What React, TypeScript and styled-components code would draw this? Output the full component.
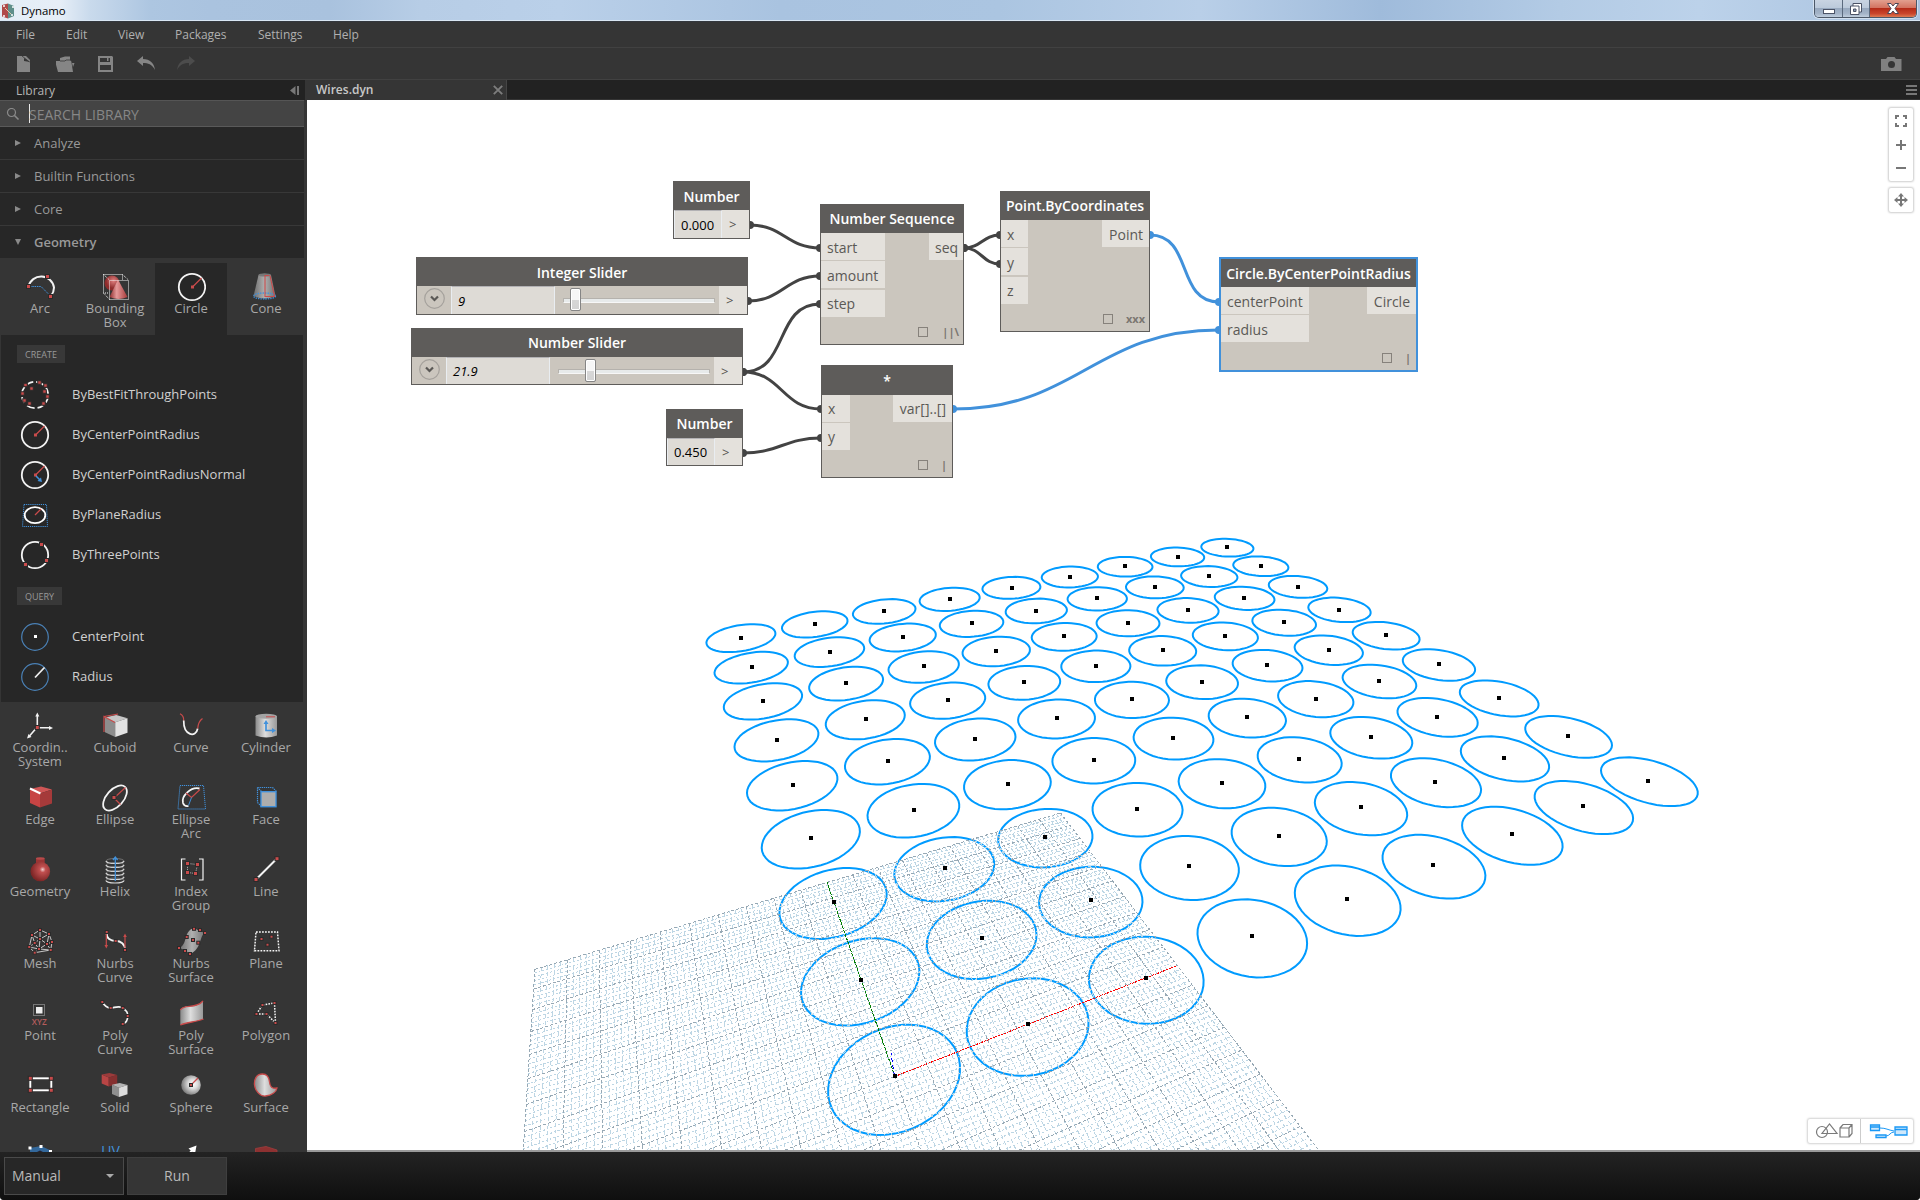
import React from "react";
import styled, { createGlobalStyle, css } from "styled-components";

const GlobalStyle = createGlobalStyle`
  * { box-sizing: border-box; }
  html, body { margin: 0; padding: 0; }
  body {
    width: 1920px; height: 1200px; overflow: hidden; background: #fff;
    font-family: "Open Sans", "Noto Sans", sans-serif;
  }
  svg { display: block; }
`;

const RED = "#c94b4b";
const BLUE = "#4191db";
const INK = "#2a2a2a";

/* ------------------------------------------------------------------ */
/* Window frame                                                        */
/* ------------------------------------------------------------------ */

const Window = styled.div`
  width: 1920px; height: 1200px;
  display: flex; flex-direction: column;
  background: #353535; overflow: hidden;
  border-radius: 0 0 4px 4px;
`;

const TitleBar = styled.header`
  height: 22px; flex: none;
  display: flex; align-items: flex-start; justify-content: space-between;
  background: linear-gradient(90deg, #e4edf6 0, #e6eef7 60px, #c9daec 90px, #adc6e1 150px, #aac3df 210px,
    #a9c2de 330px, #b7cde6 420px, #bad0e9 560px, #a9c3e0 780px, #abc5e1 1000px, #b9cfe8 1200px,
    #9fbbdb 1380px, #b3cbe5 1560px, #bcd2ea 1700px, #a9c2df 1920px);
  border-bottom: 1px solid #33373d;
  box-shadow: inset 0 -1px 0 #d9e6f3;
`;
const TitleLeft = styled.div`
  display: flex; align-items: center; gap: 6px; height: 21px; padding-left: 2px;
  font-size: 11.4px; color: #000;
`;
const WinButtons = styled.div`
  display: flex; width: 103px; height: 18px; margin-right: 3px;
  border: 1px solid #4c5868; border-top: 0; border-radius: 0 0 5px 5px; overflow: hidden;
  box-shadow: 0 0 0 1px rgba(255,255,255,.45);
`;
const WinButton = styled.div<{ $w: number; $close?: boolean }>`
  width: ${p => p.$w}px; height: 17px; display: flex; align-items: center; justify-content: center;
  border-right: 1px solid #5b6a7e;
  background: ${p => p.$close
    ? "linear-gradient(#e2a08f 0, #d37461 45%, #b52c18 50%, #c9452c 80%, #dd7a52)"
    : "linear-gradient(#c9d4e2 0, #bccadb 45%, #98a9bf 50%, #a4b4c8 80%, #c0cede)"};
  &:last-child { border-right: 0; }
`;

const MenuBar = styled.nav`
  height: 26px; flex: none; display: flex; padding-left: 16px; align-items: center;
  background: #353535; border-bottom: 1px solid #414141;
  font-size: 12px; color: #b0b0b0;
`;
const MenuItem = styled.span<{ $w: number }>`
  width: ${p => p.$w}px; line-height: 16px;
`;
const ToolBar = styled.div`
  height: 32px; flex: none; display: flex; align-items: center; justify-content: space-between;
  padding: 0 18px 0 16px; background: #353535; border-bottom: 1px solid #414141;
`;
const ToolGroup = styled.div`display: flex; gap: 20px;`;

const Main = styled.div`
  flex: 1; min-height: 0; display: flex;
`;

/* ------------------------------------------------------------------ */
/* Library sidebar                                                     */
/* ------------------------------------------------------------------ */

const Sidebar = styled.aside`
  width: 307px; height: 1072px; flex: none; display: flex; flex-direction: column;
  background: #353535; overflow: hidden;
`;
const LibraryHead = styled.div`
  width: 305px; height: 20px; flex: none; display: flex; align-items: center; justify-content: space-between;
  background: #222; color: #b5b5b5; font-size: 12px; padding: 1px 5px 0 16px;
`;
const SearchBox = styled.div`
  width: 304px; height: 27px; flex: none; display: flex; align-items: center;
  background: #444; border-top: 1px solid #555; border-bottom: 1px solid #5a5a5a;
  color: #878787; font-size: 14px; padding: 2px 0 0 6px;
`;
const Caret = styled.span`
  width: 1px; height: 19px; background: #e8e8e8; margin: -3px -1px 0 9px;
`;
const Category = styled.div<{ $open?: boolean }>`
  width: 304px; height: ${p => (p.$open ? 32 : 33)}px; flex: none; display: flex; align-items: center;
  background: #272727; border-bottom: ${p => (p.$open ? "0" : "1px solid #383838")};
  padding-left: 15px; gap: 13px; font-size: 13px; color: #999;
  font-weight: ${p => (p.$open ? 600 : 400)};
`;
const TileGrid = styled.div<{ $top?: number }>`
  display: grid; grid-template-columns: 75px 76px 75px 72px; grid-auto-rows: 72px;
  justify-items: start; padding: ${p => p.$top ?? 0}px 0 0 4px; flex: none;
`;
const TileBox = styled.div<{ $active?: boolean }>`
  width: 72px; height: 72px; padding-top: 9px; display: flex; flex-direction: column; align-items: center;
  ${p => p.$active && css`background: #272727;`}
`;
const TileLabel = styled.div`
  margin-top: -1px; color: #a8a8a8; font-size: 13px; line-height: 14px; text-align: center; white-space: pre;
`;
const Panel = styled.section`
  width: 302px; height: 367px; margin-left: 1px; flex: none; background: #272727; padding: 10px 0 0 16px;
`;
const Tag = styled.div<{ $w: number }>`
  width: ${p => p.$w}px; height: 18px; background: #383838; color: #999;
  font-size: 9px; line-height: 19px; text-align: center;
`;
const MethodList = styled.div<{ $pt: number; $pb: number }>`
  padding: ${p => p.$pt}px 0 ${p => p.$pb}px 3px;
`;
const Method = styled.div`
  height: 40px; display: flex; align-items: center; gap: 22px;
  color: #d0d0d0; font-size: 13px; line-height: 18px;
`;
const MethodName = styled.span`padding-bottom: 2px;`;

/* ------------------------------------------------------------------ */
/* Workspace                                                           */
/* ------------------------------------------------------------------ */

const Workspace = styled.main`
  flex: 1; min-width: 0; display: flex; flex-direction: column;
`;
const TabStrip = styled.div`
  height: 20px; flex: none; display: flex; justify-content: space-between; background: #222;
  border-bottom: 1px solid #353535;
`;
const Tab = styled.div`
  width: 200px; height: 20px; display: flex; align-items: center; justify-content: space-between;
  background: #353535; border-right: 1px solid #454545; padding: 0 3px 0 9px;
  color: #c8c8c8; font-size: 12px; font-weight: 600; line-height: 18px;
`;
const StripMenu = styled.div`
  width: 11px; margin: 5px 3px 0 0; display: flex; flex-direction: column; gap: 2px;
`;
const StripLine = styled.i`height: 2px; background: #777;`;

const Canvas = styled.div`
  position: relative; width: 1613px; height: 1052px; background: #fff; overflow: hidden;
  border-bottom: 2px solid #9a9a9a;
`;
const Layer = styled.svg`position: absolute; left: 0; top: 0;`;

const NodeBox = styled.div<{ $x: number; $y: number; $w: number; $h: number; $sel?: boolean }>`
  position: absolute; left: ${p => p.$x - 307}px; top: ${p => p.$y - 100}px;
  width: ${p => p.$w}px; height: ${p => p.$h}px;
  display: flex; flex-direction: column; background: #cbc6be;
  border: ${p => (p.$sel ? "2px solid #4191db" : "1px solid #5e5c5a")};
`;
const NodeHead = styled.div<{ $h: number; $line?: number }>`
  height: ${p => p.$h}px; flex: none; background: #5e5c5a; color: #fff;
  font-size: 14px; font-weight: 600; line-height: ${p => p.$line ?? 30}px; text-align: center; white-space: nowrap;
`;
const NodeBody = styled.div`
  flex: 1; min-height: 0; display: flex; justify-content: space-between; align-items: flex-start;
`;
const PortColumn = styled.div<{ $w: number }>`
  width: ${p => p.$w}px; display: flex; flex-direction: column;
`;
const Port = styled.div<{ $gap?: number; $right?: boolean; $low?: boolean }>`
  height: 27px; margin-bottom: ${p => p.$gap ?? 1}px; background: #e4e1dc; color: #5b5956;
  font-size: 14px; line-height: ${p => (p.$low ? 29 : 27)}px; padding: 0 6px;
  text-align: ${p => (p.$right ? "right" : "left")}; white-space: nowrap;
`;
const NodeFoot = styled.div<{ $pr: number; $gap: number }>`
  height: 25px; flex: none; display: flex; align-items: center; justify-content: flex-end;
  gap: ${p => p.$gap}px; padding-right: ${p => p.$pr}px; color: #7b7671; font-size: 11px; line-height: 14px;
  font-weight: 700;
`;
const PreviewBox = styled.i`width: 10px; height: 10px; border: 1px solid #86817b;`;

const ValueRow = styled.div`flex: 1; min-height: 0; display: flex; align-items: stretch;`;
const ValueField = styled.div<{ $w: number; $italic?: boolean; $line: number }>`
  width: ${p => p.$w}px; background: #dedbd6; color: #000; font-size: 13px; line-height: ${p => p.$line}px;
  border-top: 1px solid #b2b1b4; border-left: 1px solid #e9edf1; border-right: 1px solid #e9edf1;
  padding-left: 6px; font-style: ${p => (p.$italic ? "italic" : "normal")};
`;
const OutPort = styled.div<{ $w: number }>`
  width: ${p => p.$w}px; background: #e4e1dc; color: #55534f; font-size: 13px; line-height: 29px; padding-left: 7px;
`;
const SliderToggle = styled.div<{ $w: number }>`
  width: ${p => p.$w}px; padding: 2px 0 0 7px;
`;
const SliderTrack = styled.div<{ $lead: number }>`
  width: 164px; padding: 2px 0 0 ${p => p.$lead}px; display: flex;
`;
const TrackLine = styled.div`
  width: 152px; height: 5px; margin-top: 10px; border: 1px solid #b5b2ad; border-bottom-color: #f7f7f7;
  background: #e7eaea; border-radius: 1px;
`;
const Thumb = styled.div<{ $at: number }>`
  width: 11px; height: 23px; margin: -11px 0 0 ${p => p.$at}px;
  border: 1px solid #858585; border-radius: 2px; background: linear-gradient(#f6f6f6 0 50%, #d7d7d7 52%, #d3d3d3);
  box-shadow: inset 0 0 0 1px #fff;
`;

const ZoomTools = styled.div`
  position: absolute; right: 7px; top: 8px; display: flex; flex-direction: column; gap: 7px;
`;
const ToolCard = styled.div`
  width: 24px; background: #fff; border-radius: 2px; box-shadow: 0 0 2px 1px rgba(0,0,0,.2);
`;
const ViewSwitch = styled.div`
  position: absolute; right: 7px; bottom: 7px; width: 105px; height: 24px; display: flex;
  background: #fff; border-radius: 2px; box-shadow: 0 0 2px 1px rgba(0,0,0,.18);
`;
const ViewOption = styled.div<{ $w: number; $line?: boolean }>`
  width: ${p => p.$w}px; height: 24px; border-right: ${p => (p.$line ? "1px solid #ccc" : "0")};
`;

/* ------------------------------------------------------------------ */
/* Run bar                                                             */
/* ------------------------------------------------------------------ */

const RunBar = styled.footer`
  height: 48px; flex: none; display: flex; gap: 3px; padding: 5px 0 0 4px;
  background: linear-gradient(#232323, #0f0f0f); font-size: 14px; line-height: 18px; color: #b9b9b9;
`;
const RunMode = styled.div`
  width: 120px; height: 38px; border: 1px solid #4a4a4a; background: #272727;
  display: flex; align-items: center; justify-content: space-between; padding: 0 9px 0 7px;
`;
const RunButton = styled.div`
  width: 100px; height: 38px; border: 1px solid #3f3f3f; background: #353535;
  display: flex; align-items: center; justify-content: center;
`;

/* ------------------------------------------------------------------ */
/* Icons                                                               */
/* ------------------------------------------------------------------ */

const Dots = ({ at, s = 3 }: { at: number[][]; s?: number }) => (
  <>
    {at.map(([x, y], i) => (
      <rect key={i} x={x - s / 2} y={y - s / 2} width={s} height={s} fill={RED} stroke={INK} strokeWidth={1} />
    ))}
  </>
);

const Cube = ({ x, y, w, h, c }: { x: number; y: number; w: number; h: number; c: string[] }) => (
  <g transform={`translate(${x} ${y}) scale(${w / 22} ${h / 21})`}>
    <path d="M0 2.5L10 7v14L0 16.5z" fill={c[0]} />
    <path d="M0 2.5L11 0l11 3L10 7z" fill={c[1]} />
    <path d="M10 7l12-4v14L10 21z" fill={c[2]} />
  </g>
);

const CircleRadius = () => (
  <>
    <circle cx="15" cy="15" r="13.2" fill="none" stroke="#f4f4f4" strokeWidth="1.8" />
    <path d="M15.5 15l9-9" stroke={RED} strokeWidth="1.3" />
    <rect x="14" y="13.5" width="3" height="3" fill={RED} />
  </>
);

const icons: Record<string, React.ReactNode> = {
  Arc: (
    <>
      <path d="M3.5 14.5A13 13 0 0 1 29 15.500Q29 20 26 24" fill="none" stroke="#f2f2f2" strokeWidth="2" />
      <path d="M5 14.5h11l9 9" fill="none" stroke={BLUE} strokeDasharray="1.5 .8" />
      <Dots at={[[3.5, 14.5], [22.5, 4.5], [25.5, 24.5]]} s={4} />
    </>
  ),
  Box: (
    <>
      <circle cx="12" cy="11" r="7.5" fill="url(#redBall)" />
      <path d="M18 7.500L9.500 25q9 4 18 0z" fill="url(#redCone)" />
      <path d="M3.500 2.500h19v5.500M3.500 2.500v18.500h5M3.500 2.500l6 5.500M22.500 2.500l6 5.500M3.500 21l6 6.500M9.500 8.500h19v19h-19z"
        fill="none" stroke="#f4f4f4" strokeDasharray="1 1" />
    </>
  ),
  Circle: <g transform="translate(1 0)"><CircleRadius /></g>,
  Cone: (
    <>
      <path d="M7.500 3q6-2.500 12.500 0l4.500 21q-11 5-22 0z" fill="url(#steel)" />
      <ellipse cx="13.700" cy="3" rx="6.200" ry="1.600" fill="#777" />
      <ellipse cx="13.500" cy="24" rx="11" ry="3" fill="none" stroke={BLUE} strokeWidth="1.300" strokeDasharray="1.400 1" />
      <path d="M18 3.500h-4v21h9.500L19 3.500" fill="none" stroke={RED} strokeWidth="1.100" />
    </>
  ),
  Coord: (
    <>
      <path d="M12.300 15V4M14 16.800h11M11 17.500l-7 8" stroke="#f2f2f2" strokeWidth="1.600" />
      <path d="M12.300 1.500l2 4h-4zM28 17l-4 2v-4zM2 27.500l1.500-4.500 3 3z" fill="#f2f2f2" />
      <Dots at={[[12.300, 16.500]]} s={4} />
    </>
  ),
  Cuboid: (
    <>
      <Cube x={5} y={4} w={22.500} h={22} c={["#8d8d8d", "#c6c6c6", "#e2e2e2"]} />
      <path d="M4 21V5.500l11 6M4 5.500l14-2.500" fill="none" stroke={RED} strokeWidth="1.200" />
    </>
  ),
  Curve: (
    <>
      <path d="M4 2.700q4 2 3.700 7" fill="none" stroke={RED} strokeWidth="1.200" />
      <path d="M7.700 9.500C7.500 25 20 27 21.700 17.500" fill="none" stroke="#f4f4f4" strokeWidth="1.700" />
      <path d="M21.700 17.500q.5-7 4.800-10" fill="none" stroke={RED} strokeWidth="1.200" />
    </>
  ),
  Cylinder: (
    <>
      <path d="M4.500 5v19.500q11 4 21.500 0V5z" fill="url(#steelLight)" />
      <ellipse cx="15.200" cy="5.200" rx="10.700" ry="2.500" fill="#a3a3a3" />
      <path d="M15 5.800h9" stroke={RED} />
      <path d="M15 12v7.500h7" fill="none" stroke={BLUE} strokeWidth="1.700" />
      <path d="M15 9l2.500 4h-5zM25 19.500l-4 2.500v-5z" fill={BLUE} />
    </>
  ),
  Edge: (
    <>
      <Cube x={5} y={3.500} w={22} h={21} c={["#c74444", "#cf5656", "#a53a3a"]} />
      <path d="M5 5.500l10.500 5" stroke="#fff" strokeWidth="2" />
    </>
  ),
  Ellipse: (
    <>
      <ellipse cx="15" cy="15" rx="15" ry="8.500" transform="rotate(-48 15 15)" fill="none" stroke="#f4f4f4" strokeWidth="1.800" />
      <path d="M25.500 4.500L14 15l6.500 6.500" fill="none" stroke={RED} strokeWidth="1.200" />
      <Dots at={[[14, 14.500]]} s={4} />
    </>
  ),
  EllipseArc: (
    <>
      <path d="M4 2.500h23.500l2 23.500H2z" fill="none" stroke={BLUE} strokeDasharray="1.200 .8" />
      <path d="M23.500 5.500C15 3.500 5 13 7 20q1.500 4 5.500 3" fill="none" stroke="#f4f4f4" strokeWidth="1.800" />
      <path d="M10 10l5.500 4.500 8.500-8" fill="none" stroke={RED} strokeWidth="1.200" />
      <path d="M15.500 14.500l-3 8" stroke={BLUE} />
    </>
  ),
  Face: (
    <>
      <path d="M6.500 4.500h15M6.500 4.500v15M6.500 4.500l4 4M21.500 4.500l4 4M6.500 19.500l4 4" fill="none" stroke={BLUE} strokeWidth="1.200" strokeDasharray="1.300 .8" />
      <rect x="10" y="8.700" width="15" height="15" fill="#adadad" stroke={BLUE} strokeWidth="1.400" />
    </>
  ),
  Geometry: (
    <>
      <path d="M11 3.500h8.700v6H11z" fill="#9b3535" />
      <ellipse cx="15.300" cy="3.500" rx="4.400" ry="1.200" fill="#b84a4a" />
      <circle cx="15.300" cy="16.500" r="9.800" fill="url(#redBall2)" />
    </>
  ),
  Helix: (
    <>
      {[6, 10, 14, 18, 22, 25.500].map((y, i) => (
        <g key={i} fill="none">
          <path d={`M6 ${y}a9 2.500 0 0 1 18 0`} stroke="#7b7b7b" strokeWidth=".9" />
          <path d={`M6 ${y}a9 2.500 0 0 0 18 0`} stroke="#dadada" strokeWidth="1.200" />
        </g>
      ))}
      <path d="M15.300 3v23M13 5l2.300-3 2.300 3" fill="none" stroke={BLUE} strokeWidth="1.300" />
    </>
  ),
  Index: (
    <>
      <path d="M9.500 4h-4v21h4M23 4h4v21h-4" fill="none" stroke="#f4f4f4" strokeWidth="1.200" />
      <path d="M11.500 8.500l10 1-2 9-8-1z" fill="none" stroke="#bbb" strokeDasharray="1 1" />
      <Dots at={[[11.500, 8.500], [21.500, 9.500], [11.500, 17.500], [19.500, 18.500]]} s={4} />
    </>
  ),
  Line: (
    <>
      <path d="M5.500 24L25.500 4" stroke="#f4f4f4" strokeWidth="2" />
      <Dots at={[[5, 24.500], [26, 3.700]]} s={4} />
    </>
  ),
  Mesh: (
    <>
      <path d="M15 3L7 8l-2.700 12 5.400 5.700 16-2.700L27 15 24 7zM15 3v9l9-5M7 8l8 4 7 5 5-2M7 8l2.700 8L4.300 20M9.700 16l4.300 6-4.300 3.700M15 12l-5.300 4M22 17l-8 5 11.700 1M22 17l2-10M22 17l3.700 6M15 12l-1 10M14 22l-9.700-2"
        fill="none" stroke="#d5d5d5" strokeWidth=".9" />
      <Dots at={[[15, 3], [7, 8], [24, 7], [27, 15], [25.700, 23], [9.700, 25.700], [4.300, 20], [9.700, 16], [15, 12], [22, 17], [14, 22]]} />
    </>
  ),
  NurbsCurve: (
    <>
      <path d="M6.500 5c0 7 4 9 9.200 9s9.300 3 9.300 9" fill="none" stroke="#f4f4f4" strokeWidth="1.800" />
      <path d="M6.300 5v14M25 23V9" stroke={RED} strokeWidth="1.200" />
      <path d="M6.300 21.500L4.500 18H8zM25 6.500L26.800 10h-3.600z" fill={RED} />
      <Dots at={[[6.700, 5], [15.700, 14], [25, 23]]} />
    </>
  ),
  NurbsSurface: (
    <>
      <path d="M18 1q6 4 11 5c-6 3-3 16-15 21q-6-5-11-6c9-3 4-17 15-20z" fill="url(#steel)" />
      <Dots at={[[18, 1.800], [24, 3], [29, 6], [10.700, 10], [17, 13], [22.300, 15.700], [3, 21], [9, 24], [14, 27]]} />
    </>
  ),
  Plane: (
    <>
      <path d="M5 5h21.500l1.500 18.700H3.500z" fill="none" stroke="#f4f4f4" strokeWidth="1.500" strokeDasharray="1.800 1.200" />
      <Dots at={[[10.500, 12], [20.500, 9.700], [16.500, 17.700]]} />
    </>
  ),
  Point: (
    <>
      <rect x="8.500" y="5.500" width="11" height="11" fill="none" stroke="#777" />
      <rect x="11" y="8" width="6.500" height="6.500" fill="#eee" />
      <text x="14.300" y="26" fontSize="8.300" fontWeight="600" fill="#b65c5c" textAnchor="middle">XYZ</text>
    </>
  ),
  PolyCurve: (
    <>
      <path d="M2.300 3c3 5 5 6 8.400 6s8-3 12 0 5 4 5 8-2 7-5 8" fill="none" stroke="#f4f4f4" strokeWidth="1.700" />
      <Dots at={[[2.300, 3], [10.700, 9], [22.700, 9], [27.700, 17], [22.700, 25]]} />
    </>
  ),
  PolySurface: (
    <>
      <path d="M4.300 11c4-7 15 0 22.700-9v18c-7 3-16 3-22.700 6z" fill="url(#steelLight)" />
      <path d="M4.300 11c4-7 15 0 22.700-9M4.300 26c7-3 16-3 23.200-6" fill="none" stroke={RED} strokeWidth="1.300" />
    </>
  ),
  Polygon: (
    <>
      <path d="M5.500 15l6-9 12-2 1 20-9-9z" fill="none" stroke="#f4f4f4" strokeWidth="1.500" strokeDasharray="1.600 1.200" />
      <Dots at={[[5.500, 15], [11.500, 6], [23.500, 4], [24.500, 24], [15.500, 15]]} />
    </>
  ),
  Rectangle: (
    <>
      <rect x="5.300" y="7.300" width="21" height="12" fill="none" stroke="#fff" strokeWidth="1.900" />
      <Dots at={[[5.300, 7.300], [26.300, 7.300], [5.300, 19.300], [26.300, 19.300]]} s={4} />
    </>
  ),
  Solid: (
    <>
      <Cube x={1.700} y={2} w={15.500} h={13.500} c={["#b94545", "#9b3b3b", "#853030"]} />
      <Cube x={12} y={12} w={15.500} h={14} c={["#8f8f8f", "#b4b4b4", "#dcdcdc"]} />
    </>
  ),
  Sphere: (
    <>
      <circle cx="15" cy="14" r="9.800" fill="url(#ball)" />
      <path d="M15 14l7-7" stroke={RED} strokeWidth="1.200" />
      <Dots at={[[15, 14]]} />
    </>
  ),
  Surface: (
    <path d="M11.500 3C5 3 3 9 3.500 14s5 11.500 11 11 11-4 11.500-8c-5 1-7-1-7.500-6S16 3 11.500 3z" fill="url(#steelLight)" stroke={RED} strokeWidth="1.300" />
  ),
  TSpline: (
    <>
      <path d="M5 5l11-2 11 5v12L15 25 5 18z" fill="#33689b" />
      <path d="M12 9l3-1.500 3 1.500v6h-6z" fill="#223" />
      <g fill="#fff"><rect x="3.500" y="3.500" width="3" height="3" /><rect x="14.500" y="2" width="3" height="3" /><rect x="24" y="7" width="3" height="3" /></g>
    </>
  ),
  UV: <text x="10.500" y="13" fontSize="14" fontWeight="400" fill={BLUE} textAnchor="middle">UV</text>,
  Vector: (
    <>
      <path d="M18 5L4 22" stroke="#fff" strokeWidth="2" />
      <path d="M20.500 2.500l-8 3 6.500 5.500z" fill="#fff" />
    </>
  ),
  Vertex: <path d="M4.500 5.500L15 3.500l11 3.500v14l-11 4-10.500-5z" fill="#8d3131" stroke="#9d3e3e" strokeWidth=".8" />,
  BestFit: (
    <>
      <circle cx="15" cy="15" r="13.200" fill="none" stroke="#f4f4f4" strokeWidth="1.800" strokeDasharray="8 4 6 3" />
      <Dots at={[[5.500, 5], [11.500, 8.500], [19.500, 2.500], [25.500, 5.500], [24.500, 11.500], [27.500, 16.500], [2.500, 13.500], [4.500, 20.500], [9.500, 23.500], [23.500, 23.500]]} s={3.500} />
    </>
  ),
  CenterRadius: <CircleRadius />,
  CenterNormal: (
    <>
      <CircleRadius />
      <path d="M16 16l4 4" stroke={BLUE} strokeWidth="1.600" />
      <path d="M22 22l-4.500-1 3.500-3.500z" fill={BLUE} />
    </>
  ),
  PlaneRadius: (
    <>
      <path d="M4 4.500h22.500l1 22H2.500z" fill="none" stroke={BLUE} strokeDasharray="1.200 .9" />
      <ellipse cx="15" cy="15.200" rx="10.300" ry="8" fill="none" stroke="#fff" strokeWidth="1.800" />
      <path d="M15 15l6-6" stroke={RED} strokeWidth="1.300" />
    </>
  ),
  ThreePoints: (
    <>
      <circle cx="15" cy="15" r="13.200" fill="none" stroke="#f4f4f4" strokeWidth="1.800" />
      <Dots at={[[21.500, 4.500], [26.500, 20.500], [5.500, 24.500]]} s={4} />
    </>
  ),
  CenterPoint: (
    <>
      <circle cx="15" cy="15" r="13.300" fill="none" stroke="#4a80b5" strokeWidth="1.200" />
      <rect x="14" y="13" width="3" height="3" fill="#fff" />
    </>
  ),
  Radius: (
    <>
      <circle cx="15" cy="15" r="13.300" fill="none" stroke="#4a80b5" strokeWidth="1.200" />
      <path d="M15 15.500l9.500-10" stroke="#eee" strokeWidth="1.800" />
    </>
  ),
};

const Icon = ({ name }: { name: string }) => (
  <svg width="30" height="30" viewBox="0 0 30 30" fontFamily="Open Sans">{icons[name]}</svg>
);

const DefsHolder = styled.svg`position: absolute;`;

const SharedDefs = () => (
  <DefsHolder width="0" height="0">
    <defs>
      <radialGradient id="redBall" cx=".6" cy=".35"><stop offset="0" stopColor="#e08080" /><stop offset="1" stopColor="#8e2c2c" /></radialGradient>
      <radialGradient id="redBall2" cx=".62" cy=".4" r=".6"><stop offset="0" stopColor="#f0d0d0" /><stop offset=".25" stopColor="#c25050" /><stop offset="1" stopColor="#7d2626" /></radialGradient>
      <linearGradient id="redCone"><stop offset="0" stopColor="#8e2c2c" /><stop offset=".4" stopColor="#e59a9a" /><stop offset="1" stopColor="#a83a3a" /></linearGradient>
      <linearGradient id="steel"><stop offset="0" stopColor="#6d6d6d" /><stop offset=".5" stopColor="#b0b0b0" /><stop offset="1" stopColor="#707070" /></linearGradient>
      <linearGradient id="steelLight"><stop offset="0" stopColor="#8b8b8b" /><stop offset=".45" stopColor="#dedede" /><stop offset="1" stopColor="#999" /></linearGradient>
      <radialGradient id="ball" cx=".6" cy=".45" r=".6"><stop offset="0" stopColor="#fff" /><stop offset=".4" stopColor="#ddd" /><stop offset="1" stopColor="#777" /></radialGradient>
    </defs>
  </DefsHolder>
);

/* ------------------------------------------------------------------ */
/* Library content                                                     */
/* ------------------------------------------------------------------ */

const firstTiles: [string, string][] = [
  ["Arc", "Arc"], ["Box", "Bounding\nBox"], ["Circle", "Circle"], ["Cone", "Cone"],
];
const tiles: [string, string][] = [
  ["Coord", "Coordin..\nSystem"], ["Cuboid", "Cuboid"], ["Curve", "Curve"], ["Cylinder", "Cylinder"],
  ["Edge", "Edge"], ["Ellipse", "Ellipse"], ["EllipseArc", "Ellipse\nArc"], ["Face", "Face"],
  ["Geometry", "Geometry"], ["Helix", "Helix"], ["Index", "Index\nGroup"], ["Line", "Line"],
  ["Mesh", "Mesh"], ["NurbsCurve", "Nurbs\nCurve"], ["NurbsSurface", "Nurbs\nSurface"], ["Plane", "Plane"],
  ["Point", "Point"], ["PolyCurve", "Poly\nCurve"], ["PolySurface", "Poly\nSurface"], ["Polygon", "Polygon"],
  ["Rectangle", "Rectangle"], ["Solid", "Solid"], ["Sphere", "Sphere"], ["Surface", "Surface"],
  ["TSpline", ""], ["UV", ""], ["Vector", ""], ["Vertex", ""],
];
const createMethods = [
  ["BestFit", "ByBestFitThroughPoints"], ["CenterRadius", "ByCenterPointRadius"],
  ["CenterNormal", "ByCenterPointRadiusNormal"], ["PlaneRadius", "ByPlaneRadius"], ["ThreePoints", "ByThreePoints"],
];
const queryMethods = [["CenterPoint", "CenterPoint"], ["Radius", "Radius"]];

const Tiles = ({ list, top, active }: { list: [string, string][]; top?: number; active?: string }) => (
  <TileGrid $top={top}>
    {list.map(([icon, label]) => (
      <TileBox key={icon} $active={icon === active}>
        <Icon name={icon} />
        <TileLabel>{label}</TileLabel>
      </TileBox>
    ))}
  </TileGrid>
);
const Methods = ({ list, pt, pb }: { list: string[][]; pt: number; pb: number }) => (
  <MethodList $pt={pt} $pb={pb}>
    {list.map(([icon, name]) => <Method key={name}><Icon name={icon} /><MethodName>{name}</MethodName></Method>)}
  </MethodList>
);

const Arrow = ({ down }: { down?: boolean }) => (
  <svg width="6" height="8" viewBox="0 0 6 8"><path d={down ? "M0 1h6L3 7z" : "M0 1l6 3-6 3z"} fill="#8a8a8a" /></svg>
);

const Library = () => (
  <Sidebar>
    <LibraryHead>
      Library
      <svg width="10" height="10" viewBox="0 0 10 10"><path d="M5.500 0v9L0 4.500zM7 0h2v9H7z" fill="#777" /></svg>
    </LibraryHead>
    <SearchBox>
      <svg width="14" height="14" viewBox="0 0 14 14" fill="none" stroke="#8a8a8a" strokeWidth="1.200">
        <circle cx="5.500" cy="4.500" r="4" /><path d="M8.500 7.500l4 4" strokeWidth="1.600" />
      </svg>
      <Caret />
      SEARCH LIBRARY
    </SearchBox>
    <Category><Arrow />Analyze</Category>
    <Category><Arrow />Builtin Functions</Category>
    <Category><Arrow />Core</Category>
    <Category $open><Arrow down />Geometry</Category>
    <Tiles list={firstTiles} top={5} active="Circle" />
    <Panel>
      <Tag $w={48}>CREATE</Tag>
      <Methods list={createMethods} pt={12} pb={12} />
      <Tag $w={45}>QUERY</Tag>
      <Methods list={queryMethods} pt={12} pb={0} />
    </Panel>
    <Tiles list={tiles} />
  </Sidebar>
);

/* ------------------------------------------------------------------ */
/* 3D background preview                                               */
/* ------------------------------------------------------------------ */

const STEP = 21.9;
const COUNT = 9;
const RADIUS = STEP * 0.45;
const SPAN = STEP * (COUNT - 1);

// World plane to screen, fixed camera.
const project = (wx: number, wy: number): [number, number] => {
  const u = wx / SPAN;
  const v = wy / SPAN;
  const w = 1 + 0.5005 * u + 0.98436 * v;
  return [(894.4 + 1578.4 * u + 575.6 * v) / w + 0.5, (1076.7 + 95.2 * u + 189.3 * v) / w - 0.3];
};
const pt = (p: [number, number]) => `${p[0].toFixed(1)} ${p[1].toFixed(1)}`;

const circlePath = (cx: number, cy: number) => {
  const pts: string[] = [];
  for (let k = 0; k < 48; k++) {
    const a = (k / 48) * Math.PI * 2;
    pts.push(pt(project(cx + RADIUS * Math.cos(a), cy + RADIUS * Math.sin(a))));
  }
  return `M${pts.join("L")}Z`;
};

const gridPaths = () => {
  const out = { minorX: "", minorY: "", major: "" };
  for (let t = -50; t <= 50; t++) {
    const alongY = `M${pt(project(t, 50))}L${pt(project(t, -50))}`;
    const alongX = `M${pt(project(-50, t))}L${pt(project(50, t))}`;
    if (t % 5 === 0) out.major += alongY + alongX;
    else { out.minorX += alongX; out.minorY += alongY; }
  }
  return out;
};

const Preview = () => {
  const cells = Array.from({ length: COUNT * COUNT }, (_, k) => [(k % COUNT) * STEP, Math.floor(k / COUNT) * STEP]);
  const g = gridPaths();
  return (
    <Layer width="1613" height="1050" viewBox="307 100 1613 1050" fill="none">
      <path d={cells.map(([x, y]) => circlePath(x, y)).join("")} stroke="#009bff" strokeWidth="2" />
      <g shapeRendering="crispEdges" strokeWidth="1">
        <path d={g.minorX} stroke="#bdd6e4" strokeDasharray="2 2" />
        <path d={g.minorY} stroke="#bdd6e4" strokeDasharray="4 3" />
        <path d={g.major} stroke="#97a9b5" strokeDasharray="3 2" />
        <path d={`M${pt(project(0, 0))}L${pt(project(50, 0))}`} stroke="#f00" strokeDasharray="2 1" />
        <path d={`M${pt(project(0, 0))}L${pt(project(0, 50))}`} stroke="#008000" strokeDasharray="3 1" />
        <path d="M894.400 1076L891 1053" stroke="#00f" strokeDasharray="4 3" />
      </g>
      {cells.map(([x, y], i) => {
        const p = project(x, y);
        return <rect key={i} x={Math.round(p[0]) - 2} y={Math.round(p[1]) - 2} width="4" height="4" fill="#000" />;
      })}
    </Layer>
  );
};

/* ------------------------------------------------------------------ */
/* Node graph                                                          */
/* ------------------------------------------------------------------ */

const wires: { a: number[]; b: number[]; on?: boolean }[] = [
  { a: [750, 225], b: [820, 248] },
  { a: [748, 301], b: [820, 276] },
  { a: [743, 372], b: [820, 304] },
  { a: [743, 372], b: [821, 409] },
  { a: [743, 453], b: [821, 438] },
  { a: [964, 248], b: [1000, 235] },
  { a: [964, 248], b: [1000, 264] },
  { a: [1150, 235], b: [1219, 302], on: true },
  { a: [953, 409], b: [1219, 330], on: true },
];

const Wires = () => (
  <Layer width="1613" height="1050" viewBox="307 100 1613 1050" fill="none">
    {wires.map(({ a, b, on }, i) => {
      const k = Math.hypot(b[0] - a[0], b[1] - a[1]) * 0.45;
      const c = on ? "#4191db" : "#434343";
      return (
        <g key={i}>
          <path d={`M${a[0]} ${a[1]}C${a[0] + k} ${a[1]} ${b[0] - k} ${b[1]} ${b[0]} ${b[1]}`} stroke={c} strokeWidth="3" />
          <circle cx={a[0]} cy={a[1]} r="4" fill={c} />
          <circle cx={b[0]} cy={b[1]} r="4" fill={c} />
        </g>
      );
    })}
  </Layer>
);

const NumberNode = ({ x, y, h, value, line }: { x: number; y: number; h: number; value: string; line: number }) => (
  <NodeBox $x={x} $y={y} $w={77} $h={h}>
    <NodeHead $h={28} $line={line}>Number</NodeHead>
    <ValueRow>
      <ValueField $w={48} $line={line - 2}>{value}</ValueField>
      <OutPort $w={27}>&gt;</OutPort>
    </ValueRow>
  </NodeBox>
);

const SliderNode = ({ x, y, h, title, value, at, lead, track, line }: {
  x: number; y: number; h: number; title: string; value: string; at: number; lead: number; track: number; line: number;
}) => (
  <NodeBox $x={x} $y={y} $w={332} $h={h}>
    <NodeHead $h={28} $line={line}>{title}</NodeHead>
    <ValueRow>
      <SliderToggle $w={lead}>
        <svg width="21" height="21" viewBox="0 0 21 21" fill="none">
          <circle cx="10.500" cy="10.500" r="9.800" stroke="#a5a19c" strokeWidth="1.200" />
          <path d="M7 8.500l3.500 3.500L14 8.500" stroke="#5b5956" strokeWidth="2.200" />
        </svg>
      </SliderToggle>
      <ValueField $w={104} $italic $line={line - 2}>{value}</ValueField>
      <SliderTrack $lead={track}>
        <TrackLine><Thumb $at={at} /></TrackLine>
      </SliderTrack>
      <OutPort $w={28}>&gt;</OutPort>
    </ValueRow>
  </NodeBox>
);

const CodeNode = ({ x, y, w, h, head = 28, line = 30, title, ins, inW, out, outW, lacing, pr, gap, sel, low }: {
  x: number; y: number; w: number; h: number; head?: number; line?: number; title: string; ins: string[]; inW: number;
  out: string; outW: number; lacing: string; pr: number; gap: number; sel?: boolean; low?: boolean;
}) => (
  <NodeBox $x={x} $y={y} $w={w} $h={h} $sel={sel}>
    <NodeHead $h={head} $line={line}>{title}</NodeHead>
    <NodeBody>
      <PortColumn $w={inW}>
        {ins.map((p, i) => <Port key={p} $gap={i === 1 ? 2 : 1} $low={low && i < 2}>{p}</Port>)}
      </PortColumn>
      <PortColumn $w={outW}><Port $right $low={low}>{out}</Port></PortColumn>
    </NodeBody>
    <NodeFoot $pr={pr} $gap={gap}><PreviewBox />{lacing}</NodeFoot>
  </NodeBox>
);

const Graph = () => (
  <>
    <NumberNode x={673} y={181} h={58} value="0.000" line={30} />
    <SliderNode x={416} y={257} h={58} title="Integer Slider" value="9" at={6} lead={34} track={8} line={30} />
    <SliderNode x={411} y={328} h={57} title="Number Slider" value="21.9" at={26} lead={34} track={8} line={28} />
    <NumberNode x={666} y={409} h={57} value="0.450" line={28} />
    <CodeNode x={820} y={204} w={144} h={141} line={28} title="Number Sequence" ins={["start", "amount", "step"]} inW={64}
      out="seq" outW={34} lacing="||\" pr={4} gap={14} low />
    <CodeNode x={1000} y={191} w={150} h={141} line={28} title="Point.ByCoordinates" ins={["x", "y", "z"]} inW={27}
      out="Point" outW={47} lacing="xxx" pr={4} gap={13} low />
    <CodeNode x={821} y={365} w={132} h={113} head={29} title="*" ins={["x", "y"]} inW={28}
      out="var[]..[]" outW={59} lacing="|" pr={5} gap={13} />
    <CodeNode x={1219} y={257} w={199} h={115} title="Circle.ByCenterPointRadius" ins={["centerPoint", "radius"]} inW={88}
      out="Circle" outW={49} lacing="|" pr={5} gap={13} sel low />
  </>
);

/* ------------------------------------------------------------------ */
/* App                                                                 */
/* ------------------------------------------------------------------ */

const menus: [string, number][] = [["File", 50], ["Edit", 52], ["View", 57], ["Packages", 83], ["Settings", 75], ["Help", 40]];

const App = () => (
  <>
    <GlobalStyle />
    <SharedDefs />
    <Window>
      <TitleBar>
        <TitleLeft>
          <svg width="13" height="16" viewBox="0 0 13 16">
            <path d="M0 2l6-1.500v15L0 13.500z" fill="#b04a4a" /><path d="M6 .5L12 3v10l-6 2.500z" fill="#5f8f8a" />
            <path d="M3 5l6 6" stroke="#e6c9a8" /><g fill="#fff"><circle cx="2" cy="3" r="1" /><circle cx="11" cy="4" r="1" /><circle cx="2" cy="13" r="1" /><circle cx="10" cy="12" r="1" /></g>
          </svg>
          Dynamo
        </TitleLeft>
        <WinButtons>
          <WinButton $w={28}>
            <svg width="12" height="12" viewBox="0 0 12 12"><rect x=".5" y="6.500" width="11" height="4" fill="#fff" stroke="#4b5366" /></svg>
          </WinButton>
          <WinButton $w={27}>
            <svg width="12" height="12" viewBox="0 0 12 12" fill="#fff" stroke="#4b5366"><path d="M3 .5h8.500V9H3z" /><path d="M.5 3H9v8.500H.5z" /><path d="M3.500 6h2.500v2.500H3.500z" fill="#8fa0b8" /></svg>
          </WinButton>
          <WinButton $w={46} $close>
            <svg width="12" height="11" viewBox="0 0 12 11"><path d="M.5.5h3.500l2 2.500L8 .5h3.500L8 5.500l3.500 5H8L6 8l-2 2.500H.5L4 5.500z" fill="#fff" stroke="#4b4656" /></svg>
          </WinButton>
        </WinButtons>
      </TitleBar>
      <MenuBar>{menus.map(([m, w]) => <MenuItem key={m} $w={w}>{m}</MenuItem>)}</MenuBar>
      <ToolBar>
        <ToolGroup>
          <svg width="20" height="18" viewBox="0 0 20 18"><path d="M1 1h7v5l6 1v10H1z" fill="#858585" /><path d="M5 1h5l4 4v2z" fill="#858585" /><path d="M6 1l7.500 6" stroke="#353535" strokeWidth=".8" /></svg>
          <svg width="20" height="18" viewBox="0 0 20 18" fill="#858585"><path d="M4 6V3l5-1.500h5V6z" /><path d="M-1 6h5l5-.5h6l.5 2L17 17H2z" /><path d="M4 6h5l1-1h5" stroke="#353535" strokeWidth=".8" fill="none" /><path d="M16 8h2.500L17 12z" /></svg>
          <svg width="20" height="18" viewBox="0 0 20 18"><path d="M2 1h14l1 1v15H2z" fill="#858585" /><path d="M4 3h10v4H4zM4 10h11v5H4z" fill="#353535" /><path d="M11 3h1.500v3H11z" fill="#858585" /></svg>
          <svg width="20" height="18" viewBox="0 0 20 18"><path d="M1 6l6-5v3c7 0 11 4 12 11C16 9 12 8 7 8v3z" fill="#858585" /></svg>
          <svg width="20" height="18" viewBox="0 0 20 18"><path d="M19 6l-6-5v3C6 4 2 8 1 15c3-6 7-7 12-7v3z" fill="#4c4c4c" /></svg>
        </ToolGroup>
        <svg width="22" height="16" viewBox="0 0 22 16"><path d="M1 3h5l1.500-2h7L16 3h5.500v12H1z" fill="#808080" /><circle cx="11.500" cy="8.500" r="3.500" fill="#353535" /></svg>
      </ToolBar>
      <Main>
        <Library />
        <Workspace>
          <TabStrip>
            <Tab>
              Wires.dyn
              <svg width="10" height="10" viewBox="0 0 10 10"><path d="M.8.8l8.400 8.400M9.200.8L.8 9.200" stroke="#7d7d7d" strokeWidth="1.900" /></svg>
            </Tab>
            <StripMenu><StripLine /><StripLine /><StripLine /></StripMenu>
          </TabStrip>
          <Canvas>
            <Preview />
            <Wires />
            <Graph />
            <ZoomTools>
              <ToolCard>
                <svg width="24" height="73" viewBox="0 0 24 73" fill="none" stroke="#777" strokeWidth="2">
                  <path d="M7 11V8h3M14 8h3v3M17 15v3h-3M10 18H7v-3M7 37h10M12 32v10M7 60h10" />
                </svg>
              </ToolCard>
              <ToolCard>
                <svg width="24" height="24" viewBox="0 0 24 24">
                  <path d="M12 7v10M7 12h10" stroke="#777" strokeWidth="2" />
                  <path d="M12 5l3 3.500H9zM12 19l3-3.500H9zM5 12l3.500-3v6zM19 12l-3.500-3v6z" fill="#777" />
                </svg>
              </ToolCard>
            </ZoomTools>
            <ViewSwitch>
              <ViewOption $w={53} $line>
                <svg width="52" height="24" viewBox="0 0 52 24" fill="none" stroke="#7a7a7a" strokeWidth="1.200">
                  <circle cx="14" cy="13" r="5.500" /><path d="M14 14.500h15L21.500 5z" /><path d="M32 9h9v9h-9zM32 9l3-3.500h9v9L41 18M41 9l3-3.500" />
                </svg>
              </ViewOption>
              <ViewOption $w={52}>
                <svg width="52" height="24" viewBox="0 0 52 24" fill="#cfe8fb" stroke="#1a98f5">
                  <path d="M19 9c6 0 8 2 14 3M25 17c4 0 4-4 8-4" fill="none" />
                  <path d="M9.500 6h9v5.500h-9zM9.500 8h9M34 8h12v8H34zM34 10.500h12M15 16h10v2.500H15z" strokeWidth="1.300" />
                </svg>
              </ViewOption>
            </ViewSwitch>
          </Canvas>
        </Workspace>
      </Main>
      <RunBar>
        <RunMode>
          Manual
          <svg width="8" height="4" viewBox="0 0 8 4"><path d="M0 0h8L4 4z" fill="#aaa" /></svg>
        </RunMode>
        <RunButton>Run</RunButton>
      </RunBar>
    </Window>
  </>
);

export default App;
